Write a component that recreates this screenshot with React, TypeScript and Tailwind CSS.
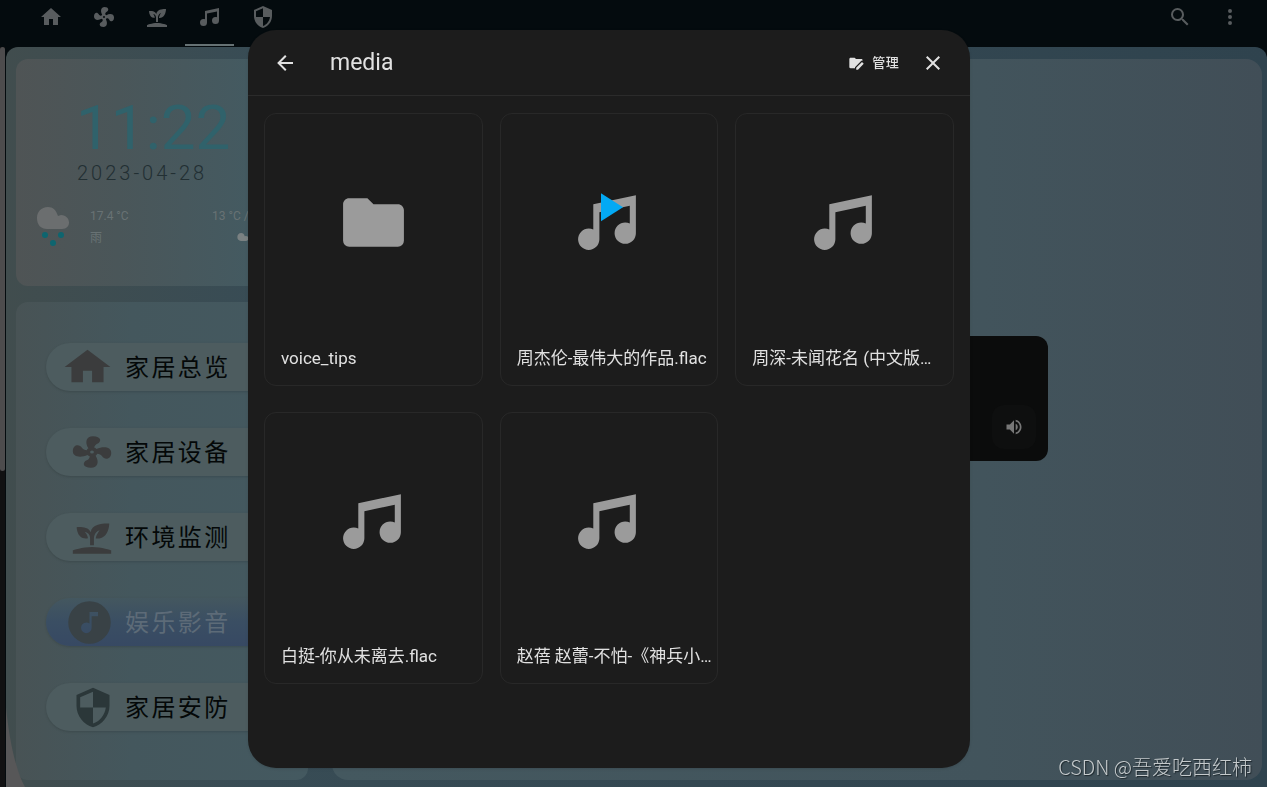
import React from "react";

const P = {
  home: "M10,20V14H14V20H19V12H22L12,3L2,12H5V20H10Z",
  fan: "M12,11A1,1 0 0,0 11,12A1,1 0 0,0 12,13A1,1 0 0,0 13,12A1,1 0 0,0 12,11M12.5,2C17,2 17.11,5.57 14.75,6.75C13.76,7.24 13.32,8.29 13.13,9.22C13.61,9.42 14.03,9.73 14.35,10.13C18.05,8.13 22.03,8.92 22.03,12.5C22.03,17 18.46,17.1 17.28,14.73C16.78,13.74 15.72,13.3 14.79,13.11C14.59,13.59 14.28,14 13.88,14.34C15.87,18.03 15.08,22 11.5,22C7,22 6.91,18.42 9.27,17.24C10.25,16.75 10.69,15.71 10.89,14.79C10.4,14.59 9.97,14.27 9.65,13.87C5.96,15.85 2,15.07 2,11.5C2,7 5.56,6.89 6.74,9.26C7.24,10.25 8.29,10.68 9.22,10.87C9.41,10.39 9.73,9.97 10.14,9.65C8.15,5.96 8.94,2 12.5,2Z",
  sprout: "M2,22V20C2,20 7,18 12,18C17,18 22,20 22,20V22H2M11.3,9.1C10.1,5.2 4,6.1 4,6.1C4,6.1 4.2,13.9 9.9,12.7C9.5,9.8 8,9 8,9C10.8,9 11,12.4 11,12.4V17C11.3,17 11.7,17 12,17C12.3,17 12.7,17 13,17V12.8C13,12.8 13,8.9 16,7.9C16,7.9 14,10.9 14,12.9C21,13.6 21,4 21,4C21,4 12.1,3 11.3,9.1Z",
  music: "M21,3V15.5A3.5,3.5 0 0,1 17.5,19A3.5,3.5 0 0,1 14,15.5A3.5,3.5 0 0,1 17.5,12C18.04,12 18.55,12.12 19,12.34V6.47L9,8.6V17.5A3.5,3.5 0 0,1 5.5,21A3.5,3.5 0 0,1 2,17.5A3.5,3.5 0 0,1 5.5,14C6.04,14 6.55,14.12 7,14.34V6L21,3Z",
  shield: "M12,12H19C18.47,16.11 15.72,19.78 12,20.92V12H5V6.3L12,3.19M12,1L3,5V11C3,16.55 6.84,21.73 12,23C17.16,21.73 21,16.55 21,11V5L12,1Z",
  back: "M20,11V13H8L13.5,18.5L12.08,19.92L4.16,12L12.08,4.08L13.5,5.5L8,11H20Z",
  close: "M19,6.41L17.59,5L12,10.59L6.41,5L5,6.41L10.59,12L5,17.59L6.41,19L12,13.41L17.59,19L19,17.59L13.41,12L19,6.41Z",
  search: "M9.5,3A6.5,6.5 0 0,1 16,9.5C16,11.11 15.41,12.59 14.44,13.73L14.71,14H15.5L20.5,19L19,20.5L14,15.5V14.71L13.73,14.44C12.59,15.41 11.11,16 9.5,16A6.5,6.5 0 0,1 3,9.5A6.5,6.5 0 0,1 9.5,3M9.5,5C7,5 5,7 5,9.5C5,12 7,14 9.5,14C12,14 14,12 14,9.5C14,7 12,5 9.5,5Z",
  dots: "M12,16A2,2 0 0,1 14,18A2,2 0 0,1 12,20A2,2 0 0,1 10,18A2,2 0 0,1 12,16M12,10A2,2 0 0,1 14,12A2,2 0 0,1 12,14A2,2 0 0,1 10,12A2,2 0 0,1 12,10M12,4A2,2 0 0,1 14,6A2,2 0 0,1 12,8A2,2 0 0,1 10,6A2,2 0 0,1 12,4Z",
  folder: "M10,4H4C2.89,4 2,4.89 2,6V18A2,2 0 0,0 4,20H20A2,2 0 0,0 22,18V8C22,6.89 21.1,6 20,6H12L10,4Z",
  manage: "M10,4H4C2.89,4 2,4.89 2,6V18A2,2 0 0,0 4,20H10.5V18.2L20,8.7L22,8.3V8C22,6.89 21.1,6 20,6H12L10,4M21,10.5L12.3,19.2V22H15L23.6,13.2L21,10.5Z",
  play: "M8,5.14V19.14L19,12.14L8,5.14Z",
  volume: "M14,3.23V5.29C16.89,6.15 19,8.83 19,12C19,15.17 16.89,17.84 14,18.7V20.77C18,19.86 21,16.28 21,12C21,7.72 18,4.14 14,3.23M16.5,12C16.5,10.23 15.5,8.71 14,7.97V16C15.5,15.29 16.5,13.76 16.5,12M3,9V15H7L12,20V4L7,9H3Z",
  musicCircle: "M16,9V7H12V12.5C11.58,12.19 11.07,12 10.5,12A2.5,2.5 0 0,0 8,14.5A2.5,2.5 0 0,0 10.5,17A2.5,2.5 0 0,0 13,14.5V9H16M12,2A10,10 0 0,1 22,12A10,10 0 0,1 12,22A10,10 0 0,1 2,12A10,10 0 0,1 12,2Z",
};

function Icon({ d, className }: { d: string; className: string }) {
  return (
    <svg viewBox="0 0 24 24" preserveAspectRatio="none" fill="currentColor" aria-hidden="true" className={`shrink-0 ${className}`}>
      <path d={d} />
    </svg>
  );
}

const tabs = [
  { d: P.home, label: "家居总览" },
  { d: P.fan, label: "家居设备" },
  { d: P.sprout, label: "环境监测" },
  { d: P.music, label: "娱乐影音", active: true },
  { d: P.shield, label: "家居安防" },
];

const menu = [
  { d: P.home, label: "家居总览", icon: "h-[46px] w-[55px] text-[#3b3c3d]" },
  { d: P.fan, label: "家居设备", icon: "h-[38px] w-[46px] text-[#3b3c3d]" },
  { d: P.sprout, label: "环境监测", icon: "h-10 w-[46px] text-[#3b3c3d]" },
  { d: P.musicCircle, label: "娱乐影音", icon: "h-[51px] w-[51px] text-[#394246]", active: true },
  { d: P.shield, label: "家居安防", icon: "h-[43px] w-11 text-[#2b3739]" },
];

const items = [
  { name: "voice_tips", d: P.folder },
  { name: "周杰伦-最伟大的作品.flac", d: P.music, hover: true },
  { name: "周深-未闻花名 (中文版…", d: P.music },
  { name: "白挺-你从未离去.flac", d: P.music },
  { name: "赵蓓 赵蕾-不怕-《神兵小…", d: P.music },
];

function TopBar() {
  return (
    <header className="flex h-[46px] shrink-0 items-start justify-between bg-[#040b0e] pr-3 pl-[26px] text-[#585c5e]">
      <nav className="flex h-full gap-1">
        {tabs.map((t) => (
          <a
            key={t.label}
            href="#"
            aria-label={t.label}
            className={`flex w-[49px] justify-center border-b-2 pt-[5px] ${t.active ? "border-[#667274]" : "border-transparent"}`}
          >
            <Icon d={t.d} className="h-6 w-6" />
          </a>
        ))}
      </nav>
      <div className="flex gap-[26px] pt-[5px] pr-[13px]">
        <button aria-label="搜索" className="h-6 w-6"><Icon d={P.search} className="h-6 w-6" /></button>
        <button aria-label="更多" className="h-6 w-6"><Icon d={P.dots} className="h-6 w-6" /></button>
      </div>
    </header>
  );
}

function WeatherCard() {
  return (
    <section className="h-[227px] rounded-xl bg-linear-to-r from-[#4f5455] via-[#4a5659] via-35% to-[#445a61] to-80%">
      <div className="pt-[38px] pl-[60px] text-[62px] leading-[62px] text-[#30626b]">11:22</div>
      <div className="pt-1 pl-[61px] text-xl leading-5 font-light tracking-[3px] text-[#222f33]">2023-04-28</div>
      <div className="flex pt-6 pl-5 text-xs text-[#687274]">
        <svg viewBox="0 0 34 40" className="h-10 w-[34px]" aria-hidden="true">
          <path fill="#6b6e6f" d="M12 0C5 0 1 5 1 11C1 18 5 22 11 22H26C36 22 35 8 25 8L22 9C20 3 17 0 12 0Z" />
          <g fill="#0e656f"><circle cx="9" cy="28" r="3" /><circle cx="25" cy="28" r="3" /><circle cx="17" cy="36" r="3" /></g>
        </svg>
        <div className="flex w-[142px] flex-col gap-1 pl-5">
          <span className="leading-[18px]">17.4 °C</span>
          <span className="leading-[18px]">雨</span>
        </div>
        <div className="flex flex-col gap-1">
          <span className="leading-[18px]">13 °C /</span>
          <svg viewBox="0 0 34 22" className="mt-1 ml-[25px] h-2 w-3" aria-hidden="true">
            <path fill="#7a8182" d="M12 0C5 0 1 5 1 11C1 18 5 22 11 22H26C36 22 35 8 25 8L22 9C20 3 17 0 12 0Z" />
          </svg>
        </div>
      </div>
    </section>
  );
}

function SideMenu() {
  return (
    <nav className="flex grow flex-col gap-[37px] rounded-xl bg-linear-to-r from-[#485355] via-[#44575d] via-40% to-[#445960] pt-[41px] pl-[30px]">
      {menu.map((m) => (
        <a
          key={m.label}
          href="#"
          className={`flex h-12 items-center rounded-l-3xl text-2xl tracking-widest shadow-sm ${
            m.active
              ? "bg-linear-to-b from-[#44575f] via-[#3a4e63] to-[#374963] text-[#5d6b78]"
              : "bg-[#4d5c5f] text-[#040808]"
          }`}
        >
          <span className="mr-[10px] flex w-[69px] justify-end"><Icon d={m.d} className={m.icon} /></span>
          <span className="pt-[2px]">{m.label}</span>
        </a>
      ))}
    </nav>
  );
}

function Dashboard() {
  return (
    <div className="flex grow pt-px">
      <div className="w-[5px] shrink-0 bg-[#111112]">
        <div className="h-[424px] rounded-sm bg-[#4d4c4d]" />
      </div>
      <main className="relative ml-px flex grow gap-6 overflow-hidden rounded-t-xl bg-linear-to-r from-[#414d4e] via-[#384c55] via-20% to-[#2f434e] pt-3 pr-[5px] pb-[7px] pl-[10px]">
        <div className="flex w-[292px] shrink-0 flex-col gap-4">
          <WeatherCard />
          <SideMenu />
        </div>
        <svg viewBox="0 0 20 80" className="absolute bottom-0 left-0 h-20 w-5" aria-hidden="true">
          <path fill="#575758" d="M0 0C3 30 9 62 19 80H0Z" />
        </svg>
        <section className="flex grow justify-center rounded-2xl bg-linear-to-r from-[#44585f] via-[#42545c] via-70% to-[#414e57] pt-[277px]">
          <div className="flex h-[125px] w-[502px] items-end justify-end gap-4 rounded-xl bg-[#0b0c0c] p-3 text-[#777777]">
            <button aria-label="音量" className="flex h-11 w-11 items-center justify-center rounded-xl bg-[#0e0f0f]">
              <Icon d={P.volume} className="h-5 w-5" />
            </button>
          </div>
        </section>
      </main>
    </div>
  );
}

function MediaDialog() {
  return (
    <div className="fixed inset-0 flex justify-center pt-[30px] pr-[49px] pb-[19px]">
      <div role="dialog" aria-label="media" className="flex w-full max-w-[722px] flex-col overflow-hidden rounded-[28px] bg-[#1c1c1c] text-[#e1e1e1] shadow-sm">
        <header className="flex h-[66px] shrink-0 items-center border-b border-[#2b2b2b] pr-[25px] pl-[25px]">
          <button aria-label="返回" className="h-6 w-6"><Icon d={P.back} className="h-6 w-6" /></button>
          <h1 className="grow pl-[33px] text-[23px] leading-8 font-normal">media</h1>
          <button className="mr-[22px] flex items-center gap-2 text-[13px] font-medium tracking-wide">
            <Icon d={P.manage} className="h-4 w-4" />
            管理
          </button>
          <button aria-label="关闭" className="h-6 w-6"><Icon d={P.close} className="h-6 w-6" /></button>
        </header>
        <div className="grid grid-cols-3 gap-x-[17px] gap-y-[26px] px-4 py-[17px]">
          {items.map((it) => (
            <button key={it.name} className="flex min-w-0 flex-col rounded-xl border border-[#282828] text-left">
              <span className="relative flex aspect-square w-full items-center justify-center text-[#9b9b9b]">
                <Icon d={it.d} className="h-[73px] w-[73px]" />
                {it.hover && (
                  <span className="absolute inset-0 flex items-center justify-center pb-[30px] text-[#03a9f4]">
                    <Icon d={P.play} className="h-12 w-12" />
                  </span>
                )}
              </span>
              <span className="block w-full truncate pt-[15px] pr-1 pb-[15px] pl-4 text-[17px] leading-6">{it.name}</span>
            </button>
          ))}
        </div>
      </div>
    </div>
  );
}

export default function App() {
  return (
    <div className="relative flex min-h-screen flex-col overflow-hidden bg-[#040b0e] font-[Roboto,'Noto_Sans_CJK_SC',sans-serif]">
      <TopBar />
      <Dashboard />
      <MediaDialog />
      <p className="absolute right-[15px] bottom-[6px] font-['Noto_Sans_CJK_SC',sans-serif] text-xl leading-7 font-light text-[#c5cacc] [text-shadow:1px_1px_1px_#1c262b]">
        CSDN @吾爱吃西红柿
      </p>
    </div>
  );
}
